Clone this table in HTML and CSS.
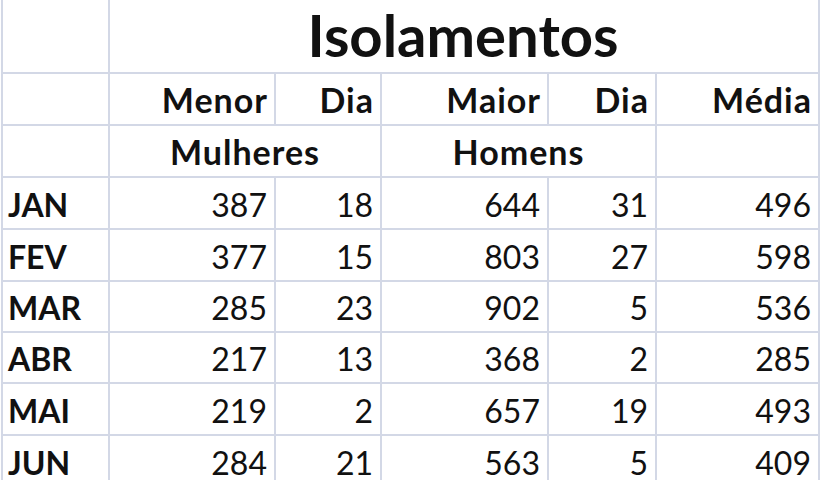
FILE: index.html
```html
<!DOCTYPE html>
<html lang="pt">
<head>
<meta charset="utf-8">
<title>Isolamentos</title>
<link rel="stylesheet" href="styles.css">
</head>
<body>
<div class="sheet">
  <div class="cell"></div>
  <div class="cell title span5">Isolamentos</div>

  <div class="cell"></div>
  <div class="cell head">Menor</div>
  <div class="cell head">Dia</div>
  <div class="cell head">Maior</div>
  <div class="cell head">Dia</div>
  <div class="cell head">Média</div>

  <div class="cell"></div>
  <div class="cell head center span2">Mulheres</div>
  <div class="cell head center span2">Homens</div>
  <div class="cell"></div>

  <div class="cell month">JAN</div>
  <div class="cell num">387</div>
  <div class="cell num">18</div>
  <div class="cell num">644</div>
  <div class="cell num">31</div>
  <div class="cell num">496</div>

  <div class="cell month">FEV</div>
  <div class="cell num">377</div>
  <div class="cell num">15</div>
  <div class="cell num">803</div>
  <div class="cell num">27</div>
  <div class="cell num">598</div>

  <div class="cell month">MAR</div>
  <div class="cell num">285</div>
  <div class="cell num">23</div>
  <div class="cell num">902</div>
  <div class="cell num">5</div>
  <div class="cell num">536</div>

  <div class="cell month">ABR</div>
  <div class="cell num">217</div>
  <div class="cell num">13</div>
  <div class="cell num">368</div>
  <div class="cell num">2</div>
  <div class="cell num">285</div>

  <div class="cell month">MAI</div>
  <div class="cell num">219</div>
  <div class="cell num">2</div>
  <div class="cell num">657</div>
  <div class="cell num">19</div>
  <div class="cell num">493</div>

  <div class="cell month">JUN</div>
  <div class="cell num">284</div>
  <div class="cell num">21</div>
  <div class="cell num">563</div>
  <div class="cell num">5</div>
  <div class="cell num">409</div>
</div>
</body>
</html>
```

FILE: styles.css
```css
html, body {
  margin: 0;
  padding: 0;
  background: #ffffff;
  overflow: hidden;
  height: 480px;
}

.sheet {
  margin-left: 1px;
  width: max-content;
  display: grid;
  grid-template-columns: 105px 164px 104px 165px 106px 161px;
  grid-template-rows: 72px 50px 50px 50px 50px 49px 49px 50px 50px;
  gap: 2px;
  padding: 0 2px 2px 2px;
  background: #d3d8e6;
  font-family: Lato, "Open Sans", sans-serif;
  color: #111111;
}

.cell {
  background: #ffffff;
  display: flex;
  align-items: flex-end;
  justify-content: flex-end;
  padding: 0 7px 7px 5px;
  font-size: 32px;
  line-height: 1;
  white-space: nowrap;
  overflow: hidden;
}

.title {
  justify-content: center;
  font-size: 58px;
  font-weight: 700;
  padding-bottom: 8px;
}

.span5 {
  grid-column: span 5;
}

.span2 {
  grid-column: span 2;
}

.head {
  font-weight: 700;
  font-size: 34px;
  letter-spacing: 1px;
  padding-right: 6px;
}

.center {
  justify-content: center;
  padding-left: 0;
  padding-right: 0;
}

.month {
  justify-content: flex-start;
  font-weight: 700;
}

.num {
  font-weight: 400;
}
```
